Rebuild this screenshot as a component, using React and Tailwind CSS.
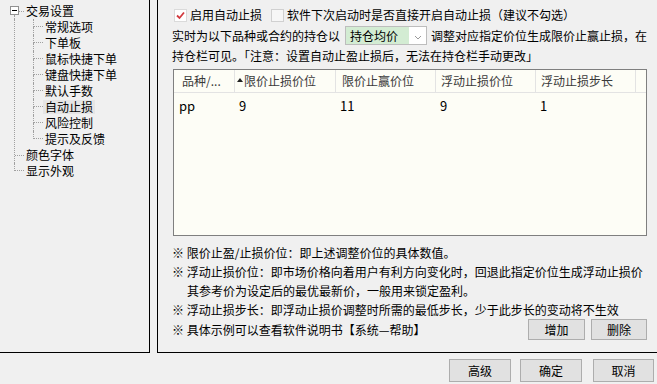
const line = "border-dotted border-[#a0a0a0]";

function Connector({ last }) {
  return (
    <div className="flex flex-col w-[10px] shrink-0">
      <div className="h-[8px] border-l border-b border-dotted border-[#a0a0a0]" />
      <div className={last ? "h-[8px]" : "h-[8px] border-l border-dotted border-[#a0a0a0]"} />
    </div>
  );
}

function Label({ children, active }) {
  return (
    <span className={`px-[2px] h-[14px] leading-[14px] whitespace-nowrap ${active ? "bg-[#e5e5e5]" : ""}`}>
      {children}
    </span>
  );
}

const subItems = ["常规选项", "下单板", "鼠标快捷下单", "键盘快捷下单", "默认手数", "自动止损", "风险控制", "提示及反馈"];

function Tree() {
  return (
    <div className="w-[150px] shrink-0 bg-[#f0f0f0] border-r border-b border-black pt-[3px]">
      {/* root node */}
      <div className="flex items-center h-[16px] pl-[10px]">
        <div className="flex flex-col items-center w-[9px] h-[16px]">
          <div className="h-[3px]" />
          <div className="w-[9px] h-[9px] border border-[#919191] bg-white flex items-center justify-center">
            <div className="w-[5px] h-px bg-black" />
          </div>
          <div className={`h-[4px] border-l ${line}`} />
        </div>
        <div className={`w-[5px] h-0 border-t ${line}`} />
        <Label>交易设置</Label>
      </div>

      <div className={`ml-[14px] border-l ${line}`}>
        <div className="ml-[18px]">
          {subItems.map((s, i) => (
            <div key={s} className="flex items-center h-[16px]">
              <Connector last={i === subItems.length - 1} />
              <Label active={s === "自动止损"}>{s}</Label>
            </div>
          ))}
        </div>
        <div className="flex items-center h-[16px]">
          <div className={`w-[9px] h-0 border-t ${line}`} />
          <Label>颜色字体</Label>
        </div>
      </div>
      <div className="flex items-center h-[16px] pl-[14px]">
        <Connector last />
        <Label>显示外观</Label>
      </div>
    </div>
  );
}

function Btn({ children, w }) {
  return (
    <button className={`${w} h-[21px] bg-[#e1e1e1] border border-[#adadad] text-[12px] leading-none flex items-center justify-center`}>
      {children}
    </button>
  );
}

const cols = [
  { w: "w-[61px]", head: "品种/...", hp: "pl-[8px]", val: "pp", vp: "pl-[5px]" },
  { w: "w-[101px]", head: "限价止损价位", hp: "pl-[2px]", val: "9", vp: "pl-[4px]", sort: true },
  { w: "w-[100px]", head: "限价止赢价位", hp: "pl-[6px]", val: "11", vp: "pl-[4px]" },
  { w: "w-[100px]", head: "浮动止损价位", hp: "pl-[5px]", val: "9", vp: "pl-[4px]" },
  { w: "w-[100px]", head: "浮动止损步长", hp: "pl-[5px]", val: "1", vp: "pl-[4px]" },
];

function StopTable() {
  return (
    <div className="mt-[3px] ml-[1px] h-[167px] border border-[#7f7f7f] bg-[#fdfdf6] flex flex-col">
      <div className="flex h-[23px] border-b border-[#e3e3e3] text-[#3a3a3a]">
        {cols.map((c) => (
          <div key={c.head} className={`${c.w} ${c.hp} shrink-0 flex items-center border-r border-[#e3e3e3] whitespace-nowrap`}>
            {c.sort && (
              <svg width="6" height="4" viewBox="0 0 6 4" className="mr-[1px] mb-[3px]">
                <polygon points="0,4 3,0 6,4" fill="#222" />
              </svg>
            )}
            {c.head}
          </div>
        ))}
        <div className="flex-1" />
      </div>
      <div className="flex h-[26px] text-[13px] text-black">
        {cols.map((c) => (
          <div key={c.head} className={`${c.w} ${c.vp} shrink-0 flex items-center`}>
            {c.val}
          </div>
        ))}
      </div>
    </div>
  );
}

export default function App() {
  return (
    <div className="w-[657px] h-[384px] bg-[#f0f0f0] flex flex-col text-[12px] text-black font-['Noto_Sans_CJK_SC',sans-serif] overflow-hidden">
      <div className="flex h-[353px] gap-[7px]">
        <Tree />

        <div className="flex-1 border-l border-b border-black pl-[14px] pr-[15px] pt-[5px] flex flex-col">
          {/* options */}
          <div className="flex items-center h-[20px] whitespace-nowrap">
            <div className="ml-[2px] w-[13px] h-[13px] border border-[#dadada] bg-white flex items-center justify-center">
              <svg width="11" height="11" viewBox="0 0 11 11">
                <polyline points="2,5.5 4.5,8 9,2.5" fill="none" stroke="#d23a3f" strokeWidth="1.8" />
              </svg>
            </div>
            <span className="ml-[3px]">启用自动止损</span>
            <div className="ml-[9px] w-[13px] h-[13px] border border-[#d0d0d0] bg-[#f6f6f6]" />
            <span className="ml-[3px]">软件下次启动时是否直接开启自动止损（建议不勾选）</span>
          </div>

          <div className="flex items-center h-[21px] whitespace-nowrap">
            <span>实时为以下品种或合约的持仓以</span>
            <div className="ml-[5px] w-[82px] h-[19px] border border-[#bdbdbd] flex shrink-0">
              <div className="flex-1 bg-[#d3ecd3] pl-[4px] flex items-center">持仓均价</div>
              <div className="w-[17px] bg-white flex items-end justify-center pb-[4px]">
                <svg width="8" height="5" viewBox="0 0 8 5">
                  <polyline points="1,1 4,4 7,1" fill="none" stroke="#9a9a9a" strokeWidth="1" />
                </svg>
              </div>
            </div>
            <span className="ml-[4px]">调整对应指定价位生成限价止赢止损，在</span>
          </div>

          <div className="flex items-center h-[20px] whitespace-nowrap">
            持仓栏可见。「注意：设置自动止盈止损后，无法在持仓栏手动更改」
          </div>

          <StopTable />

          {/* notes */}
          <div className="mt-[7px] leading-[19px] whitespace-nowrap">
            <div>※ 限价止盈/止损价位：即上述调整价位的具体数值。</div>
            <div>※ 浮动止损价位：即市场价格向着用户有利方向变化时，回退此指定价位生成浮动止损价</div>
            <div className="pl-[15px]">其参考价为设定后的最优最新价，一般用来锁定盈利。</div>
            <div>※ 浮动止损步长：即浮动止损价调整时所需的最低步长，少于此步长的变动将不生效</div>
            <div className="flex items-center justify-between h-[21px]">
              <span>※ 具体示例可以查看软件说明书【系统—帮助】</span>
              <div className="flex gap-[6px]">
                <Btn w="w-[57px]">增加</Btn>
                <Btn w="w-[56px]">删除</Btn>
              </div>
            </div>
          </div>
        </div>
      </div>

      {/* dialog buttons */}
      <div className="flex justify-end items-start pt-[6px] pr-[3px]">
        <button className="w-[62px] h-[23px] bg-[#e1e1e1] border border-[#adadad] text-[12px]">高级</button>
        <button className="ml-[9px] w-[62px] h-[23px] bg-[#e1e1e1] border border-[#adadad] text-[12px]">确定</button>
        <button className="ml-[11px] w-[61px] h-[23px] bg-[#e1e1e1] border border-[#adadad] text-[12px]">取消</button>
      </div>
    </div>
  );
}
